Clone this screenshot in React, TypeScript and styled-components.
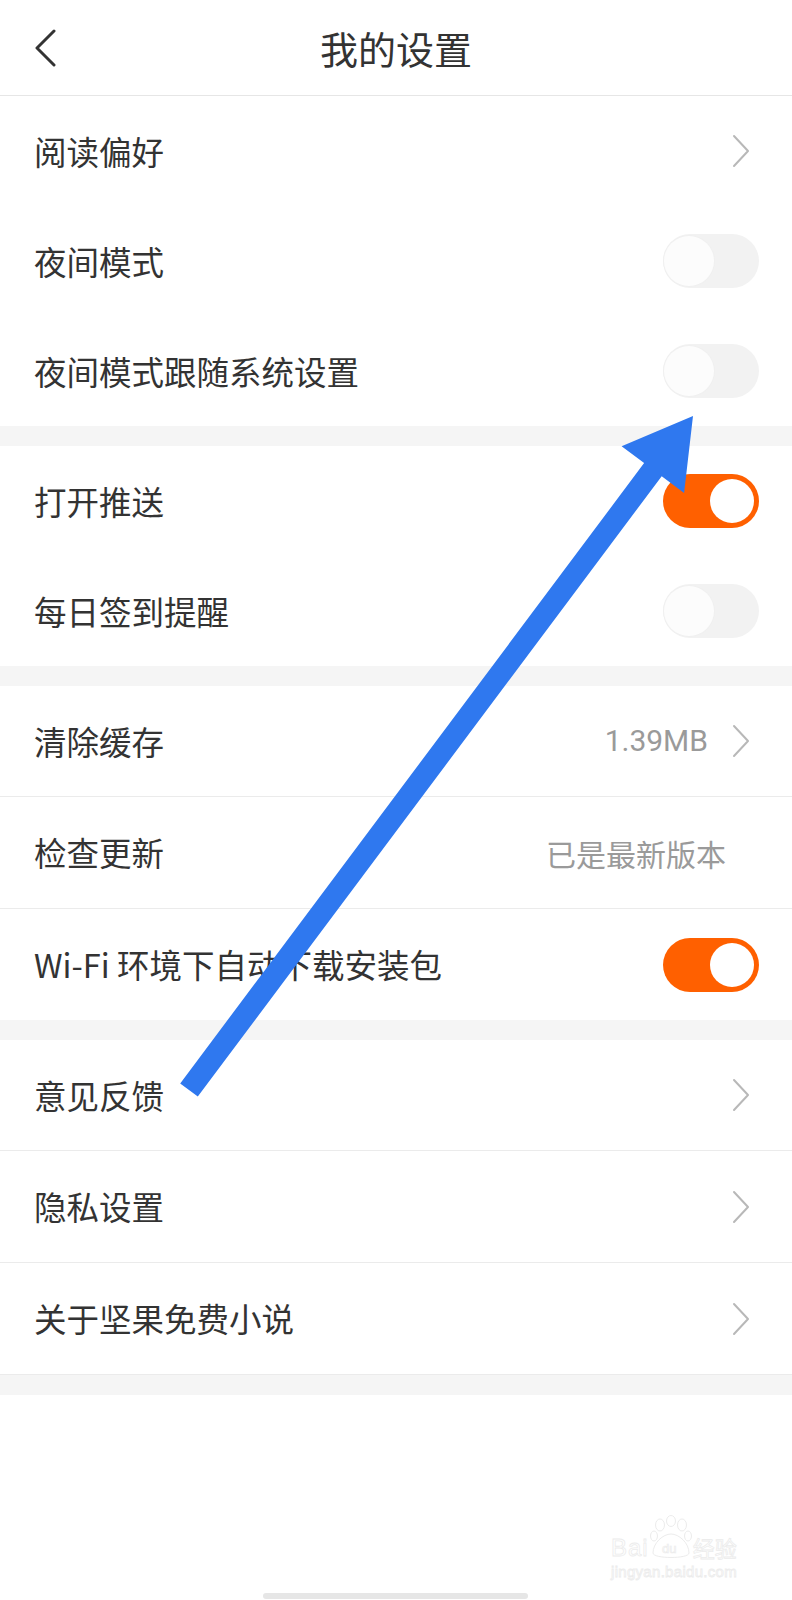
import React from "react";
import styled, { createGlobalStyle } from "styled-components";

const Global = createGlobalStyle`
  html, body { margin: 0; padding: 0; background: #ffffff; }
  body { font-family: "Noto Sans CJK SC", "Noto Sans", sans-serif; -webkit-font-smoothing: antialiased; }
  * { box-sizing: border-box; }
`;

const Page = styled.div`
  position: relative;
  width: 792px;
  min-height: 1600px;
  background: #ffffff;
  overflow: hidden;
`;

const Header = styled.header`
  position: relative;
  height: 96px;
  display: flex;
  align-items: center;
  justify-content: center;
  border-bottom: 1px solid #e6e6e6;
`;

const BackButton = styled.div`
  position: absolute;
  left: 33px;
  top: 29px;
  width: 24px;
  height: 38px;
  display: flex;
`;

const Title = styled.h1`
  margin: 0;
  font-size: 38px;
  font-weight: 400;
  color: #333333;
  line-height: 1;
`;

const Section = styled.section<{ $lined?: boolean }>`
  display: flex;
  flex-direction: column;
  background: #ffffff;
  ${(p) => (p.$lined ? "border-bottom: 1px solid #ebebeb;" : "")}
`;

const Gap = styled.div`
  height: 20px;
  background: #f5f5f5;
`;

const Row = styled.div<{ $divider?: boolean }>`
  height: 110px;
  display: flex;
  align-items: center;
  padding-left: 34px;
  ${(p) => (p.$divider ? "border-top: 1px solid #ebebeb; height: 112px;" : "")}
`;

const Label = styled.span`
  flex: 1;
  font-size: 32.5px;
  color: #333333;
  line-height: 1;
  white-space: nowrap;
`;

const Value = styled.span<{ $mr: number }>`
  font-family: Roboto, "Noto Sans CJK SC", sans-serif;
  font-size: 30px;
  color: #9a9a9a;
  line-height: 1;
  margin-right: ${(p) => p.$mr}px;
`;

const CnValue = styled(Value)`
  font-family: "Noto Sans CJK SC", sans-serif;
`;

const ChevronBox = styled.div`
  width: 18px;
  height: 34px;
  margin-right: 42px;
  display: flex;
`;

const Track = styled.div<{ $on: boolean }>`
  position: relative;
  width: 96px;
  height: 54px;
  margin-right: 33px;
  border-radius: 27px;
  background: ${(p) => (p.$on ? "#ff6000" : "#f2f2f2")};
`;

const Knob = styled.div<{ $on: boolean }>`
  position: absolute;
  top: ${(p) => (p.$on ? 5 : 2)}px;
  left: ${(p) => (p.$on ? 47 : 1)}px;
  width: ${(p) => (p.$on ? 44 : 50)}px;
  height: ${(p) => (p.$on ? 44 : 50)}px;
  border-radius: 50%;
  background: ${(p) => (p.$on ? "#ffffff" : "#fcfcfc")};
  box-shadow: ${(p) => (p.$on ? "none" : "0 0 0 1px #f0f0f0")};
`;

const Overlay = styled.svg`
  position: absolute;
  left: 0;
  top: 0;
  pointer-events: none;
`;

const HomeBar = styled.div`
  position: absolute;
  left: 263px;
  top: 1593px;
  width: 265px;
  height: 6px;
  border-radius: 3px;
  background: #e6e6e6;
`;

const Watermark = styled.div`
  position: absolute;
  left: 611px;
  top: 1513px;
  width: 140px;
  display: flex;
  flex-direction: column;
  align-items: flex-start;
  color: #ffffff;
  -webkit-text-stroke: 0.8px #ececec;
`;

const MarkTop = styled.div`
  display: flex;
  align-items: flex-end;
  height: 46px;
`;

const MarkBig = styled.span`
  font-family: "Liberation Sans", sans-serif;
  font-size: 24px;
  line-height: 22px;
  letter-spacing: 1px;
`;

const MarkCn = styled.span`
  font-size: 22px;
  line-height: 24px;
`;

const MarkUrl = styled.span`
  font-family: "Liberation Sans", sans-serif;
  font-size: 15px;
  line-height: 18px;
  letter-spacing: 0.3px;
  margin-top: 4px;
`;

const Chevron = () => (
  <ChevronBox>
    <svg width="18" height="34" viewBox="0 0 18 34">
      <path d="M2 2 L16 17 L2 32" fill="none" stroke="#b8b8b8" strokeWidth="2" strokeLinecap="round" strokeLinejoin="round" />
    </svg>
  </ChevronBox>
);

const Toggle = ({ on }: { on: boolean }) => (
  <Track $on={on}>
    <Knob $on={on} />
  </Track>
);

type Item = {
  label: string;
  kind: "chev" | "toggle" | "value" | "plain";
  on?: boolean;
  value?: string;
};

const sections: { lined: boolean; items: Item[] }[] = [
  {
    lined: false,
    items: [
      { label: "阅读偏好", kind: "chev" },
      { label: "夜间模式", kind: "toggle", on: false },
      { label: "夜间模式跟随系统设置", kind: "toggle", on: false },
    ],
  },
  {
    lined: false,
    items: [
      { label: "打开推送", kind: "toggle", on: true },
      { label: "每日签到提醒", kind: "toggle", on: false },
    ],
  },
  {
    lined: false,
    items: [
      { label: "清除缓存", kind: "value", value: "1.39MB" },
      { label: "检查更新", kind: "plain", value: "已是最新版本" },
      { label: "Wi-Fi 环境下自动下载安装包", kind: "toggle", on: true },
    ],
  },
  {
    lined: true,
    items: [
      { label: "意见反馈", kind: "chev" },
      { label: "隐私设置", kind: "chev" },
      { label: "关于坚果免费小说", kind: "chev" },
    ],
  },
];

// arrow geometry
const T = { x: 189, y: 1090 };
const P = { x: 693, y: 416 };
const len = Math.hypot(P.x - T.x, P.y - T.y);
const u = { x: (P.x - T.x) / len, y: (P.y - T.y) / len };
const n = { x: -u.y, y: u.x };
const w = 11;
const h = 39;
const hl = 67;
const B = { x: P.x - hl * u.x, y: P.y - hl * u.y };
const pts = [
  [T.x - w * n.x, T.y - w * n.y],
  [B.x - w * n.x, B.y - w * n.y],
  [B.x - h * n.x, B.y - h * n.y],
  [P.x, P.y],
  [B.x + h * n.x, B.y + h * n.y],
  [B.x + w * n.x, B.y + w * n.y],
  [T.x + w * n.x, T.y + w * n.y],
]
  .map((p) => `${p[0].toFixed(1)},${p[1].toFixed(1)}`)
  .join(" ");

export default function App() {
  return (
    <Page>
      <Global />
      <Header>
        <BackButton>
          <svg width="24" height="38" viewBox="0 0 24 38">
            <path d="M21 2 L4 19 L21 36" fill="none" stroke="#333" strokeWidth="3" strokeLinecap="round" strokeLinejoin="round" />
          </svg>
        </BackButton>
        <Title>我的设置</Title>
      </Header>
      {sections.map((s, si) => (
        <React.Fragment key={si}>
          {si > 0 && <Gap />}
          <Section $lined={s.lined}>
            {s.items.map((it, i) => (
              <Row key={it.label} $divider={si >= 2 && i > 0}>
                <Label>{it.label}</Label>
                {it.kind === "chev" && <Chevron />}
                {it.kind === "toggle" && <Toggle on={!!it.on} />}
                {it.kind === "value" && (
                  <>
                    <Value $mr={24}>{it.value}</Value>
                    <Chevron />
                  </>
                )}
                {it.kind === "plain" && <CnValue $mr={66}>{it.value}</CnValue>}
              </Row>
            ))}
          </Section>
        </React.Fragment>
      ))}
      <Gap />
      <Watermark>
        <MarkTop>
          <MarkBig>Bai</MarkBig>
          <svg width="44" height="44" viewBox="0 0 44 44">
            <g fill="none" stroke="#ececec" strokeWidth="1">
              <ellipse cx="11" cy="10" rx="4.5" ry="6" />
              <ellipse cx="22" cy="6" rx="4.5" ry="5.5" />
              <ellipse cx="33" cy="10" rx="4.5" ry="6" />
              <ellipse cx="39" cy="21" rx="3.5" ry="5" />
              <ellipse cx="5" cy="21" rx="3.5" ry="5" />
              <path d="M4 38 C4 28 14 19 22 19 C30 19 40 28 40 38 C40 44 4 44 4 38 Z" />
            </g>
            <text x="13" y="38" fontFamily="Liberation Sans" fontSize="13" fill="none" stroke="#ececec" strokeWidth="0.7">du</text>
          </svg>
          <MarkCn>经验</MarkCn>
        </MarkTop>
        <MarkUrl>jingyan.baidu.com</MarkUrl>
      </Watermark>
      <HomeBar />
      <Overlay width="792" height="1600" viewBox="0 0 792 1600">
        <polygon points={pts} fill="#2f78ef" />
      </Overlay>
    </Page>
  );
}
